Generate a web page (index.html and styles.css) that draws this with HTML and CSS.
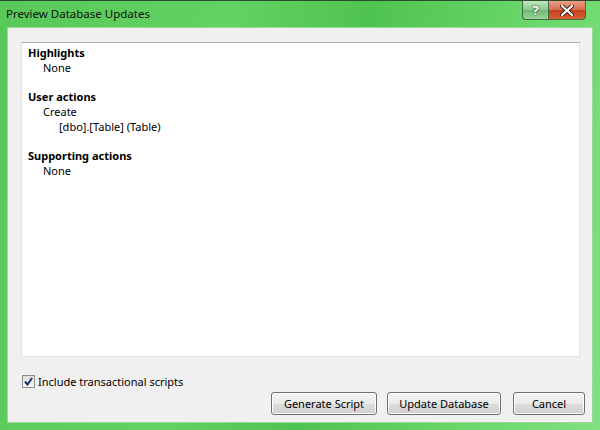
FILE: index.html
```html
<!DOCTYPE html>
<html lang="en">
<head>
    <meta charset="UTF-8">
    <title>Preview Database Updates</title>
    <link rel="stylesheet" href="styles.css">
</head>
<body>
    <div class="window">
        <div class="title-bar">
            <span class="title">Preview Database Updates</span>
            <div class="caption-buttons">
                <div class="cap-btn help">?</div>
                <div class="cap-btn close">
                    <svg width="14" height="11" viewBox="0 0 14 11">
                        <path d="M2 1 L12 10 M12 1 L2 10" stroke="#3a1a10" stroke-width="4" stroke-linecap="round"/>
                        <path d="M2 1 L12 10 M12 1 L2 10" stroke="#ffffff" stroke-width="2.2" stroke-linecap="round"/>
                    </svg>
                </div>
            </div>
        </div>

        <div class="client">
            <div class="preview">
                <div class="group">
                    <div class="heading">Highlights</div>
                    <div class="item">None</div>
                </div>
                <div class="group">
                    <div class="heading">User actions</div>
                    <div class="item">Create</div>
                    <div class="subitem">[dbo].[Table] (Table)</div>
                </div>
                <div class="group">
                    <div class="heading">Supporting actions</div>
                    <div class="item">None</div>
                </div>
            </div>

            <label class="option">
                <span class="checkbox">
                    <svg width="9" height="9" viewBox="0 0 9 9">
                        <path d="M1 4.5 L3.5 7.5 L8 1" fill="none" stroke="#1c2f7a" stroke-width="2"/>
                    </svg>
                </span>
                Include transactional scripts
            </label>

            <div class="actions">
                <button class="btn btn-generate">Generate Script</button>
                <button class="btn btn-update">Update Database</button>
                <button class="btn btn-cancel">Cancel</button>
            </div>
        </div>
    </div>
</body>
</html>
```

FILE: styles.css
```css
body {
    margin: 0;
    font-family: "Noto Sans", "Open Sans", sans-serif;
    font-size: 11px;
    color: #000;
}
.window {
    width: 600px;
    height: 430px;
    box-sizing: border-box;
    border-top: 1px solid #2d4a2d;
    background: linear-gradient(100deg, #58c858 0%, #62d262 35%, #4fc34f 55%, #6ad86a 80%, #7fe07f 100%);
    display: flex;
    flex-direction: column;
}
.title-bar {
    height: 26px;
    display: flex;
    align-items: flex-start;
    justify-content: space-between;
}
.title {
    margin: 5px 0 0 6px;
    font-size: 11.5px;
    color: #111;
}
.caption-buttons {
    display: flex;
    margin-right: 14px;
}
.cap-btn {
    height: 19px;
    box-sizing: border-box;
    border: 1px solid #3d6a44;
    border-top: none;
    display: flex;
    align-items: center;
    justify-content: center;
}
.help {
    width: 27px;
    border-radius: 0 0 0 4px;
    background: linear-gradient(#bfe6bf, #8cc98c 50%, #6fb76f 51%, #9ad69a);
    color: #fff;
    font-weight: bold;
    font-size: 13px;
    text-shadow: 0 0 2px #2a4a2a, 0 0 1px #2a4a2a;
}
.close {
    width: 37px;
    border-left: none;
    border-radius: 0 0 4px 0;
    background: linear-gradient(#eaa08a, #d96a4c 50%, #c4401f 51%, #d8612f);
}
.client {
    flex: 1;
    margin: 0 7px 7px 7px;
    background: #f0f0f0;
    border: 1px solid #9bd99b;
    display: flex;
    flex-direction: column;
    padding: 14px 12px 6px 13px;
}
.preview {
    height: 315px;
    box-sizing: border-box;
    background: #fff;
    border: 1px solid #e2e3ea;
    border-top-color: #abadb3;
    padding: 2px 6px;
}
.group {
    margin-bottom: 14px;
}
.heading {
    font-weight: bold;
    line-height: 15px;
}
.item {
    padding-left: 15px;
    line-height: 15px;
}
.subitem {
    padding-left: 31px;
    line-height: 15px;
}
.option {
    display: flex;
    align-items: center;
    margin-top: 17px;
    margin-left: 1px;
    gap: 3px;
}
.checkbox {
    width: 13px;
    height: 13px;
    box-sizing: border-box;
    border: 1px solid #8f8f8f;
    background: linear-gradient(#dcdcdc, #fafafa);
    display: flex;
    align-items: center;
    justify-content: center;
}
.actions {
    display: flex;
    justify-content: flex-end;
    gap: 10px;
    margin-top: 3px;
    margin-right: -5px;
}
.btn {
    height: 23px;
    font-family: inherit;
    font-size: 11px;
    color: #000;
    border: 1px solid #707070;
    border-radius: 3px;
    background: linear-gradient(#f2f2f2, #ebebeb 50%, #dddddd 51%, #cfcfcf);
    box-shadow: inset 0 0 0 1px #fcfcfc;
    padding: 0;
}
.btn-generate { width: 106px; }
.btn-update { width: 114px; }
.btn-cancel { width: 72px; margin-left: 2px; }
```
